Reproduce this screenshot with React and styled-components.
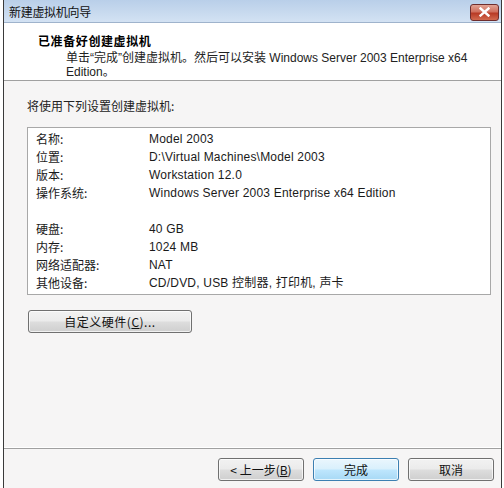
import React from "react";
import styled, { createGlobalStyle } from "styled-components";

const GlobalStyle = createGlobalStyle`
  html, body {
    margin: 0;
    padding: 0;
    background: #ffffff;
  }
  body {
    font-family: Tahoma, "DejaVu Sans", "Noto Sans CJK SC", sans-serif;
    font-size: 12px;
    color: #000;
  }
`;

const Window = styled.div`
  margin-left: 3px;
  width: 497px;
  height: 488px;
  border-left: 1px solid #3a3a3a;
  border-right: 1px solid #3a3a3a;
  display: flex;
  flex-direction: column;
  background: #f6f5f5;
`;

const TitleBar = styled.div`
  height: 23px;
  display: flex;
  align-items: center;
  justify-content: space-between;
  padding: 0 2px 0 5px;
  background: linear-gradient(#b9cfe9, #d3e2f3);
  border-bottom: 1px solid #9fb3cc;
  box-sizing: border-box;
`;

const Title = styled.span`
  font-family: "Noto Sans CJK SC", sans-serif;
  font-size: 12px;
  color: #111;
  letter-spacing: -0.3px;
`;

const CloseButton = styled.div`
  width: 29px;
  height: 17px;
  margin-top: 2px;
  border: 1px solid #6e2d2d;
  border-radius: 3px;
  box-sizing: border-box;
  background: linear-gradient(#e2a394 0%, #d0705e 45%, #b83a25 55%, #d26a4f 100%);
  display: flex;
  align-items: center;
  justify-content: center;
`;

const Header = styled.div`
  height: 58px;
  background: #ffffff;
  border-bottom: 1px solid #a0a0a0;
  padding: 10px 0 0 34px;
  box-sizing: border-box;
  font-family: "Noto Sans CJK SC", sans-serif;
`;

const HeaderTitle = styled.div`
  font-weight: bold;
  font-size: 12px;
  line-height: 16px;
  letter-spacing: 0.6px;
`;

const HeaderText = styled.div`
  margin-left: 28px;
  margin-top: 2px;
  width: 410px;
  font-size: 12px;
  line-height: 14px;
  font-family: "Liberation Sans", "Noto Sans CJK SC", sans-serif;
  color: #222;
`;

const Body = styled.div`
  flex: 1;
  padding: 17px 10px 0 23px;
  display: flex;
  flex-direction: column;
  border-bottom: 1px solid #ffffff;
`;

const Intro = styled.div`
  font-family: "Noto Sans CJK SC", sans-serif;
  font-size: 12px;
  line-height: 16px;
  color: #222;
`;

const SummaryBox = styled.div`
  margin-top: 13px;
  height: 168px;
  box-sizing: border-box;
  border: 1px solid #a8a8a8;
  background: #ffffff;
  padding: 2px 0 0 8px;
`;

const Row = styled.div`
  display: grid;
  grid-template-columns: 113px 1fr;
  height: 18px;
  line-height: 18px;
  margin-top: ${(p) => (p.$gap ? "18px" : "0")};
  color: #1a1a1a;
`;

const Label = styled.span`
  font-family: "Noto Sans CJK SC", sans-serif;
  font-size: 12px;
`;

const Value = styled.span`
  font-family: "Liberation Sans", "Noto Sans CJK SC", sans-serif;
  font-size: 12px;
  letter-spacing: 0.2px;
`;

const Button = styled.button`
  width: ${(p) => p.$width || "86px"};
  height: 23px;
  padding: 0;
  border: 1px solid ${(p) => (p.$primary ? "#3c7fb1" : "#707070")};
  border-radius: 3px;
  font-family: "Noto Sans CJK SC", sans-serif;
  font-size: 12px;
  color: #111;
  background: ${(p) =>
    p.$primary
      ? "linear-gradient(#eaf6fd 0%, #d9f0fc 48%, #bee6fd 52%, #a7d9f5 100%)"
      : "linear-gradient(#f2f2f2 0%, #ebebeb 48%, #dddddd 52%, #cfcfcf 100%)"};
  box-shadow: inset 0 0 0 1px rgba(255, 255, 255, 0.7);
`;

const CustomButton = styled(Button)`
  margin-top: 15px;
  margin-left: 1px;
  letter-spacing: 0.5px;
`;

const Footer = styled.div`
  height: 40px;
  border-top: 1px solid #a0a0a0;
  display: flex;
  justify-content: flex-end;
  align-items: flex-start;
  gap: 9px;
  padding: 9px 7px 0 0;
  box-sizing: border-box;
`;

const rows = [
  ["名称:", "Model 2003"],
  ["位置:", "D:\\Virtual Machines\\Model 2003"],
  ["版本:", "Workstation 12.0"],
  ["操作系统:", "Windows Server 2003 Enterprise x64 Edition"],
  ["硬盘:", "40 GB", true],
  ["内存:", "1024 MB"],
  ["网络适配器:", "NAT"],
  ["其他设备:", "CD/DVD, USB 控制器, 打印机, 声卡"],
];

const App = () => (
  <>
    <GlobalStyle />
    <Window>
      <TitleBar>
        <Title>新建虚拟机向导</Title>
        <CloseButton>
          <svg width="11" height="10" viewBox="0 0 11 10">
            <path
              d="M1.5 1.5 L9.5 8.5 M9.5 1.5 L1.5 8.5"
              stroke="#ffffff"
              strokeWidth="2.4"
              strokeLinecap="square"
            />
          </svg>
        </CloseButton>
      </TitleBar>
      <Header>
        <HeaderTitle>已准备好创建虚拟机</HeaderTitle>
        <HeaderText>
          单击“完成”创建虚拟机。然后可以安装 Windows Server 2003 Enterprise x64
          Edition。
        </HeaderText>
      </Header>
      <Body>
        <Intro>将使用下列设置创建虚拟机:</Intro>
        <SummaryBox>
          {rows.map(([label, value, gap]) => (
            <Row key={label} $gap={gap}>
              <Label>{label}</Label>
              <Value>{value}</Value>
            </Row>
          ))}
        </SummaryBox>
        <div>
          <CustomButton $width="164px">
            自定义硬件(<u>C</u>)...
          </CustomButton>
        </div>
      </Body>
      <Footer>
        <Button>&lt; 上一步(<u>B</u>)</Button>
        <Button $primary>完成</Button>
        <Button>取消</Button>
      </Footer>
    </Window>
  </>
);

export default App;
